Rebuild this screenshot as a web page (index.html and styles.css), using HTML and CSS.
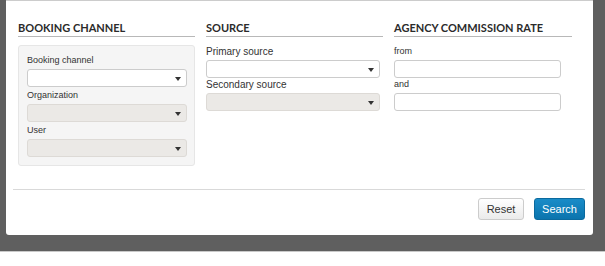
FILE: index.html
```html
<!DOCTYPE HTML>
<html>
	<head>
		<meta charset="utf-8">
		<link rel="stylesheet" href="styles.css">
	</head>
	<body>
		<div class="overlay">
			<div class="modal">
				<div class="filters">
					<div class="col">
						<h3>BOOKING CHANNEL</h3>
						<div class="panel">
							<label class="small">Booking channel</label>
							<div class="select"><span class="caret"></span></div>
							<label class="small">Organization</label>
							<div class="select disabled"><span class="caret"></span></div>
							<label class="small">User</label>
							<div class="select disabled"><span class="caret"></span></div>
						</div>
					</div>
					<div class="col">
						<h3>SOURCE</h3>
						<div class="plain">
							<label>Primary source</label>
							<div class="select wide"><span class="caret"></span></div>
							<label>Secondary source</label>
							<div class="select wide disabled"><span class="caret"></span></div>
						</div>
					</div>
					<div class="col">
						<h3>AGENCY COMMISSION RATE</h3>
						<div class="plain">
							<label class="small">from</label>
							<input class="text" type="text">
							<label class="small">and</label>
							<input class="text" type="text">
						</div>
					</div>
				</div>
				<div class="footer">
					<button class="btn">Reset</button>
					<button class="btn primary">Search</button>
				</div>
			</div>
		</div>
	</body>
</html>
```

FILE: styles.css
```css
body {
	margin: 0;
	background: #ffffff;
	font-family: "Liberation Sans", Arial, sans-serif;
	color: #333333;
}

.overlay {
	background: #5f5f5f;
	height: 252px;
	border-bottom: 1px solid #c9c9c9;
	padding: 0 12px 0 6px;
	box-sizing: border-box;
}

.modal {
	background: #ffffff;
	height: 235px;
	border-top: 1px solid #cccccc;
	border-radius: 0 0 3px 3px;
	padding: 19px 8px 0 7px;
	box-sizing: border-box;
}

.filters {
	display: grid;
	grid-template-columns: 177px 177px 178px;
	column-gap: 11px;
	padding-left: 5px;
	height: 169px;
}

.col h3 {
	margin: 0;
	font-family: Lato, "Liberation Sans", sans-serif;
	font-weight: bold;
	font-size: 11px;
	line-height: 15px;
	padding-bottom: 1px;
	border-bottom: 1px solid #b8b8b8;
	color: #2b2b2b;
}

.panel {
	margin-top: 8px;
	background: #f5f5f5;
	border: 1px solid #e6e6e6;
	border-radius: 3px;
	padding: 8px 8px 9px 8px;
	height: 121px;
	box-sizing: border-box;
}

.plain {
	margin-top: 8px;
}

label {
	display: block;
	font-size: 10px;
	line-height: 13px;
}

label.small {
	font-size: 9px;
}

.panel label {
	margin-top: 2px;
}

.panel label:first-child {
	margin-top: 0;
}

.select {
	position: relative;
	height: 18px;
	width: 160px;
	background: #ffffff;
	border: 1px solid #cccccc;
	border-radius: 3px;
	box-sizing: border-box;
	margin-top: 2px;
}

.select.wide {
	width: 174px;
}

.select.disabled {
	background: #ebe9e6;
	border-color: #dddad6;
}

.caret {
	position: absolute;
	right: 5px;
	top: 7px;
	border-left: 3px solid transparent;
	border-right: 3px solid transparent;
	border-top: 4px solid #333333;
}

.text {
	display: block;
	width: 167px;
	height: 18px;
	margin: 2px 0 0 0;
	border: 1px solid #cccccc;
	border-radius: 3px;
	box-sizing: border-box;
	background: #ffffff;
	padding: 0;
}

.footer {
	border-top: 1px solid #d9d9d9;
	display: flex;
	justify-content: flex-end;
	gap: 10px;
	padding-top: 8px;
}

.btn {
	height: 22px;
	width: 46px;
	border: 1px solid #cccccc;
	border-radius: 3px;
	background: linear-gradient(#ffffff, #ebebeb);
	font-family: "Liberation Sans", Arial, sans-serif;
	font-size: 11px;
	color: #333333;
	padding: 0;
}

.btn.primary {
	width: 51px;
	border-color: #0b6a9e;
	background: linear-gradient(#1a8cc8, #0b74ad);
	color: #ffffff;
}
```
